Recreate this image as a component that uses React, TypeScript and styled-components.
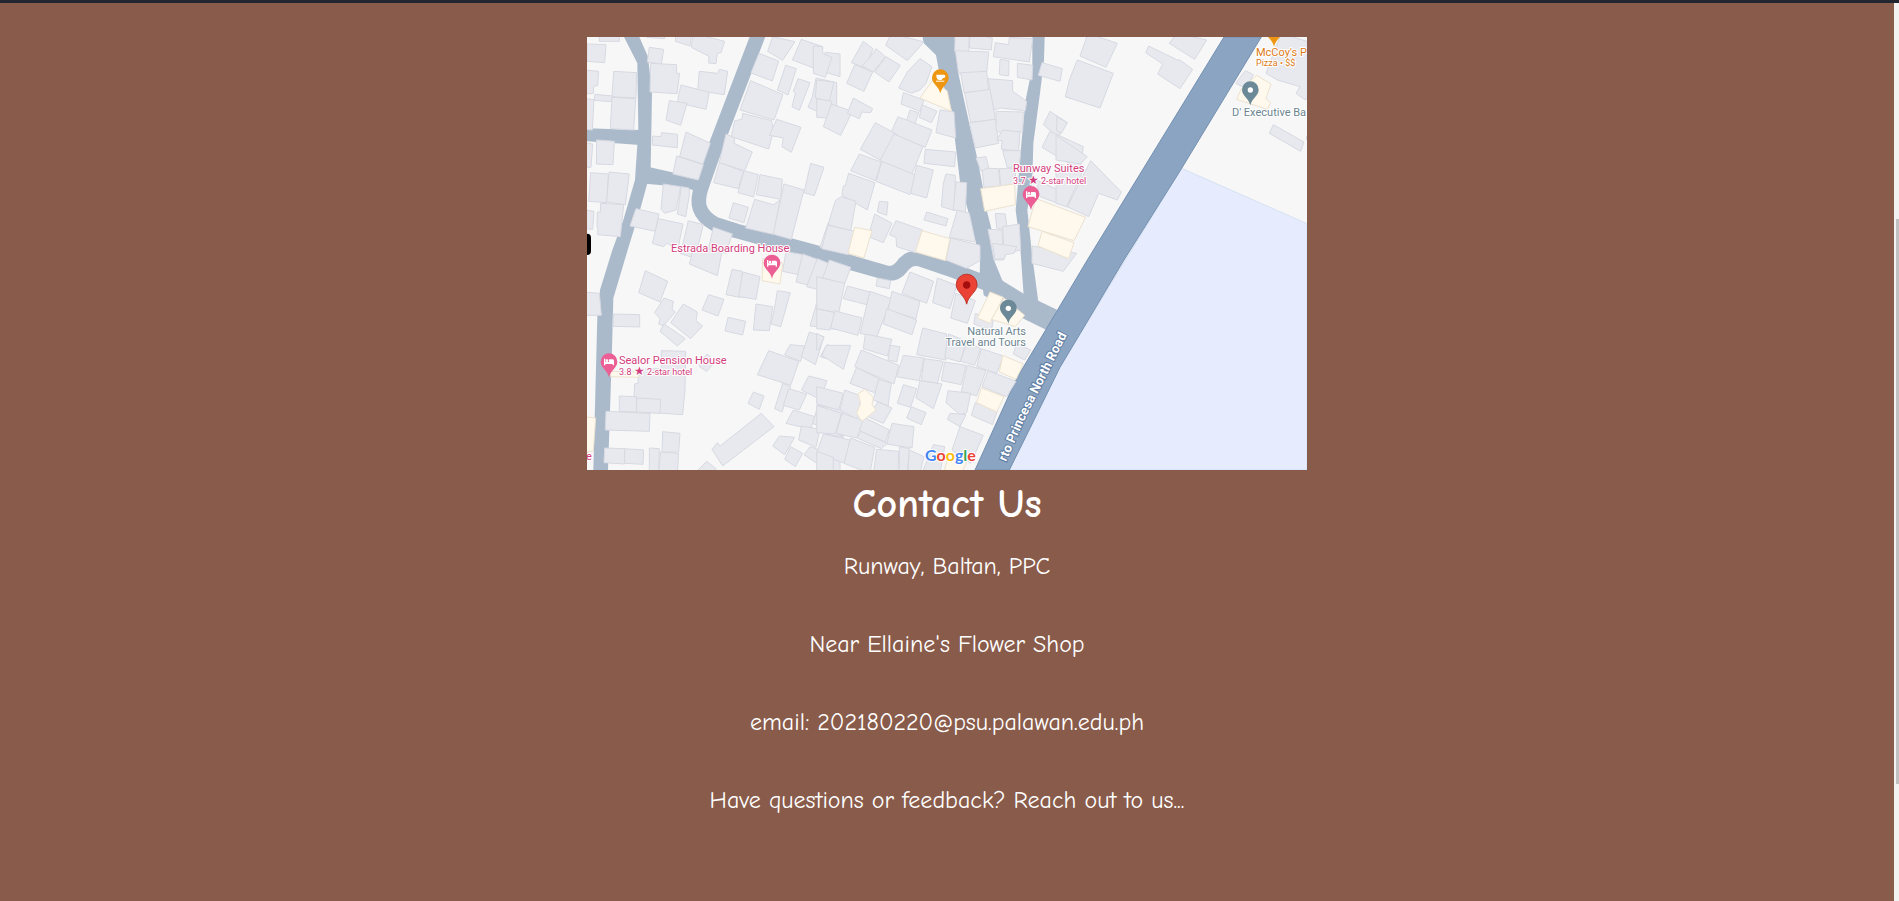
import React from "react";
import styled, { createGlobalStyle } from "styled-components";

const GlobalStyle = createGlobalStyle`
  * { box-sizing: border-box; }
  body { margin: 0; background: #895b4a; }
`;

const Page = styled.div`
  display: flex;
  flex-direction: column;
  min-height: 100vh;
`;

const HeaderEdge = styled.header`
  height: 3px;
  background: #212630;
`;

const Body = styled.div`
  display: flex;
  flex: 1;
`;

const Contact = styled.main`
  flex: 1;
  display: flex;
  flex-direction: column;
  align-items: center;
  padding: 34px 16px 0;
  color: #fff;
  text-align: center;
  font-family: "Comic Sans MS", "Comic Neue", Lato, sans-serif;
`;

const MapFrame = styled.svg`
  display: block;
  width: 100%;
  max-width: 720px;
  height: auto;
  font-family: Roboto, sans-serif;
`;

const Title = styled.h2`
  margin: 8px 0 0;
  font-size: 40px;
  line-height: 52px;
  font-weight: 700;
`;

const Line = styled.p`
  margin: 20px 0 26px;
  font-size: 24px;
  line-height: 32px;
`;

const ScrollTrack = styled.div`
  position: relative;
  width: 5px;
  background: #f2f2f3;
`;

const ScrollThumb = styled.div`
  position: absolute;
  top: 24%;
  right: 0;
  width: 3px;
  height: 63%;
  background: #c1c1c1;
`;

const Label = styled.text<{ $size?: number }>`
  font-size: ${(p) => p.$size ?? 11}px;
  stroke: #fff;
  stroke-width: 2px;
  stroke-linejoin: round;
  paint-order: stroke;
`;

const Star = styled.tspan`
  font-size: 12px;
`;

const RoadName = styled.text`
  font-size: 13px;
  font-weight: 700;
  fill: #fff;
  stroke: #5f7da3;
  stroke-width: 2px;
  paint-order: stroke;
`;

const Wordmark = styled.text`
  font-family: Lato, sans-serif;
  font-size: 16px;
  font-weight: 700;
  stroke: #fff;
  stroke-width: 2px;
  paint-order: stroke;
`;

type Block = { x: number; y: number; houses: string[]; shops: string[] };

const blocks: Block[] = [
  {
    x: -21,
    y: -21,
    houses: [
      "58,10 118,10 118,34 58,34", "21,42 78,44 74,98 21,94", "15,120 56,124 53,166 40,170 41,190 15,192",
      "101,124 170,128 168,204 96,200", "45,193 97,198 95,215 42,211", "96,202 167,206 161,300 91,296",
      "15,206 42,209 37,300 15,298", "208,52 251,58 244,102 202,96", "212,100 290,104 289,130 299,130 291,191 210,186",
      "200,10 255,10 254,26 200,22", "288,10 335,10 330,48 286,34", "340,10 434,34 423,68 412,70 408,101 386,99 387,79 334,52",
      "358,124 413,130 418,118 443,124 433,194 353,182", "303,165 388,187 378,238 293,218 296,193",
      "268,212 321,220 302,286 258,270", "218,318 243,320 244,308 293,313 292,353 217,345",
      "318,306 391,340 369,402 299,380", "290,378 370,404 355,450 279,432", "50,330 103,334 99,404 49,402",
      "15,338 38,342 33,412 15,412", "32,428 85,432 80,518 26,514", "87,426 148,432 136,524 80,516",
      "62,520 131,524 121,620 53,614 54,592 51,592 52,546 61,546", "15,540 42,544 38,598 15,596",
      "168,536 237,552 226,604 150,588", "235,566 309,582 294,655 278,650 262,640 250,650 217,640",
      "250,462 302,470 288,540 254,550 243,538", "304,470 327,474 329,490 317,560 292,552",
      "325,572 370,584 352,656 308,644",
      "400,592 457,612 438,670 386,654", "578,20 645,35 608,91 563,64", "537,70 596,93 577,153 513,129",
      "664,28 728,50 712,118 637,90", "736,67 780,72 780,140 706,118", "617,106 649,116 624,195 592,180",
      "654,146 690,158 658,241 636,230 646,190 640,184", "708,144 770,158 770,270 684,232 697,200",
      "512,152 609,194 582,270 480,240", "488,250 575,272 580,305 566,357 454,320 464,272 486,268",
      "590,268 663,292 634,367 606,350 610,324 568,316", "438,312 464,324 462,340 517,366 494,422 418,398",
      "418,398 490,424 475,476 401,458", "492,422 535,434 521,501 474,488", "540,434 607,448 602,508 529,494",
      "612,462 672,480 634,628 578,612 600,520", "524,508 580,524 600,510 580,613 497,594",
      "692,400 732,412 703,497 672,488", "460,518 505,532 492,578 447,564", "744,580 780,560 780,664 720,652",
    ],
    shops: [],
  },
  {
    x: 699,
    y: -21,
    houses: [
      "-20,48 8,50 8,70 36,82 16,142 -20,130", "130,34 159,56 137,114 94,98", "168,56 196,80 160,126 126,108 150,82",
      "198,80 241,106 207,156 164,126", "104,104 158,126 132,184 80,160", "214,10 312,36 262,92 197,46",
      "300,86 336,110 318,160 300,180 274,190 236,174 262,126", "-10,150 42,156 28,214 -14,204",
      "-10,206 36,214 22,264 -10,262", "34,222 97,244 62,316 10,290", "100,204 158,236 152,248 126,246 118,266 82,250",
      "250,188 312,210 300,244 243,222", "270,240 296,248 284,284 260,272", "306,224 351,244 334,278 298,262",
      "360,240 402,246 407,324 348,308", "234,260 336,300 316,352 212,310", "166,278 232,314 180,390 121,358",
      "222,312 309,350 276,432 180,392", "316,358 407,366 404,410 312,400", "118,372 184,396 166,452 92,422",
      "186,394 288,436 270,494 168,454", "290,406 340,420 320,504 272,490", "86,430 165,458 142,540 66,496 70,468 76,466",
      "64,500 108,514 92,602 24,584 46,512", "24,586 104,604 84,674 5,656", "178,514 204,516 200,556 172,546",
      "164,552 216,580 190,638 145,620", "228,572 308,600 286,668 230,650 228,622 208,614", "320,546 384,566 378,588 312,570",
      "378,432 406,436 404,542 364,530 370,460", "408,456 440,458 436,550 400,538", "412,540 448,550 466,636 388,622",
      "392,624 480,646 480,692 440,715 378,690", "406,10 448,10 446,66 404,64", "450,10 517,24 514,60 448,54",
      "406,62 506,66 500,126 416,132", "422,128 500,124 506,182 432,188", "434,188 512,178 526,268 452,278",
      "448,278 526,268 536,340 466,354", "526,38 566,44 568,22 638,26 628,96 520,80", "540,88 567,92 566,138 538,134",
      "592,100 638,106 636,150 592,142", "504,146 578,152 578,184 620,214 616,242 540,234 522,240", "666,98 727,116 720,154 655,136",
      "528,244 610,246 608,306 566,304 558,320 528,300", "548,300 600,306 596,362 544,358 546,332 530,330", "548,362 602,362 598,406 562,414",
      "486,414 536,416 540,468 492,472", "538,416 587,414 586,462 542,468", "468,384 498,380 506,412 484,424",
      "526,550 556,552 560,588 548,598 530,594", "504,598 546,600 550,690 522,690", "548,590 598,582 602,660 552,672",
      "690,244 742,278 714,322 670,284", "690,304 790,350 780,420 666,352", "648,450 760,500 746,532 660,500",
      "756,130 790,120 790,210 738,202", "636,648 770,670 730,724 636,700",
    ],
    shops: [
      "340,148 382,184 394,244 300,204", "482,476 584,462 586,524 494,544", "104,592 156,602 132,684 84,670",
      "306,602 390,626 376,692 286,666", "648,506 797,562 762,632 624,590 634,552", "666,604 762,638 746,686 654,648",
    ],
  },
  {
    x: 1419,
    y: -21,
    houses: [
      "84,10 172,40 138,112 60,78", "52,90 160,130 120,234 16,200 28,150", "266,48 352,90 360,90 398,118 360,176 293,132 308,102 257,68",
      "350,10 440,30 404,88 328,40", "556,122 580,134 560,176 527,160", "664,10 760,40 760,178 736,210 708,190 720,170 652,150 618,130",
      "640,284 732,336 722,364 628,310", "-10,260 22,278 4,310 -10,302", "-12,316 82,380 62,402 -12,390",
      "92,392 184,486 172,510 116,490 86,560 22,530", "-12,400 70,420 20,530 -12,520", "740,318 760,320 760,332 740,330",
    ],
    shops: ["590,136 633,162 618,206 632,218 622,238 530,208 544,176"],
  },
  {
    x: -21,
    y: 639,
    houses: [
      "310,-20 346,10 330,20 300,10", "344,-15 425,10 412,77 328,42", "10,126 58,130 64,196 10,196", "100,192 179,194 179,231 99,229",
      "196,62 263,94 240,156 176,128", "252,144 280,154 276,178 286,186 250,228 236,222 240,206 224,188",
      "310,162 352,186 348,212 368,228 332,266 272,218", "252,222 316,266 292,288 240,244", "386,134 432,148 414,198 366,180",
      "456,58 487,64 480,142 438,134", "488,66 540,80 528,148 476,140", "444,202 497,214 488,255 435,243",
      "528,162 578,170 568,242 520,240", "592,122 631,128 602,230 574,222 586,160", "618,5 670,14 656,74 608,64",
      "668,12 712,28 688,106 648,96", "712,26 756,44 736,124 680,110", "740,78 780,90 770,186 708,166", "710,160 780,190 770,238 690,228",
      "244,302 317,304 315,420 308,494 160,484 164,402 174,400 176,358 244,356", "364,330 382,312 405,336 380,364 358,350",
      "78,484 210,490 208,544 76,540", "118,438 170,440 170,486 118,484", "170,444 242,448 240,490 170,486",
      "74,594 134,596 133,642 72,638", "134,596 191,600 189,643 134,640", "208,594 238,596 236,670 208,670",
      "248,545 300,550 296,606 246,606", "242,606 296,610 292,670 236,670", "544,490 582,530 428,648 396,598 412,578 420,588",
      "566,302 657,334 632,406 532,374", "630,284 674,288 662,334 614,314", "688,246 732,260 706,344 664,320",
      "742,284 790,300 790,340 720,320", "520,426 552,438 538,478 504,460", "608,400 632,410 606,486 584,476",
      "626,416 680,432 658,480 610,466", "686,378 741,392 720,448 664,420", "640,480 704,500 692,538 618,520",
      "598,558 644,562 614,614 578,588", "632,590 668,610 646,650 614,628", "664,528 720,538 708,592 656,570",
      "690,590 780,620 780,680 740,660 672,614", "714,466 790,480 790,560 698,520", "380,634 408,656 400,670 350,664", "736,552 790,560 790,610 730,596",
    ],
    shops: ["548,26 608,40 600,102 546,92", "92,364 178,366 176,382 92,380", "10,500 47,504 40,602 10,610"],
  },
  {
    x: 699,
    y: 639,
    houses: [
      "28,30 92,52 74,102 8,84", "172,84 212,92 208,116 168,108", "270,66 341,94 320,160 246,130", "352,84 410,106 390,176 338,158",
      "408,130 466,152 442,220 392,204", "82,108 150,126 140,164 70,146", "-10,80 74,100 56,190 -10,176", "42,182 126,204 114,256 32,234",
      "150,124 214,146 170,262 120,250", "216,124 300,154 288,206 204,180", "200,176 290,210 276,254 190,222", "-10,176 44,188 30,240 -10,236",
      "308,234 380,252 378,330 290,314", "136,252 216,268 202,318 130,296", "124,300 236,346 222,402 104,350", "18,286 92,286 70,358 6,316",
      "110,352 184,390 164,428 90,400", "210,286 240,290 230,336 204,330", "250,316 312,324 298,392 230,380", "312,326 370,334 352,400 304,392",
      "386,252 440,274 420,336 374,322", "440,276 482,296 464,346 422,334", "374,336 438,346 424,404 364,392", "442,346 498,362 470,438 424,424",
      "484,296 550,318 530,370 470,350", "504,362 588,394 560,440 486,410", "384,422 452,430 440,488 420,494 378,458",
      "466,458 532,482 518,524 454,496", "390,490 438,494 420,530 382,508", "300,392 366,402 340,476 288,444", "250,404 290,416 272,472 232,460",
      "176,388 214,400 204,468 160,450", "74,420 124,438 112,508 60,480", "-10,410 70,430 56,480 -10,462", "174,456 216,474 190,520 144,500",
      "66,490 130,512 110,564 48,550", "-10,466 64,490 46,552 -10,548", "132,502 208,540 196,576 118,542", "216,520 282,530 276,594 200,582",
      "122,544 202,580 184,596 112,564", "10,552 90,570 76,640 -10,610", "92,564 164,592 150,670 72,640", "274,470 318,488 304,524 260,504",
      "170,598 236,604 234,670 160,670", "238,590 268,596 262,670 238,670", "268,600 312,620 300,670 264,670", "340,584 374,590 360,670 310,660",
      "420,530 490,556 452,640 396,600", "466,190 520,212 514,240 462,222", "590,280 632,300 614,330 580,312", "-10,250 12,262 -4,300 -10,300",
      "518,-20 590,-10 582,10 556,14 554,26 524,28", "-10,604 40,622 40,670 -10,660",
    ],
    shops: [
      "510,126 550,142 510,220 472,204", "552,144 614,196 586,230 514,208", "548,316 610,342 588,388 538,366",
      "484,414 552,440 530,486 470,458", "114,432 134,418 160,442 156,464 168,480 126,514 110,490 122,460",
      "390,606 440,638 424,670 370,670",
    ],
  },
];

const pinPath = "M0 46C-4 24 -25 18 -25 -1A25 25 0 0 1 25 -1C25 18 4 24 0 46Z";

type PinKind = "hotel" | "cafe" | "place" | "target";
const pinColour: Record<PinKind, string> = { hotel: "#ec5f94", cafe: "#ee9611", place: "#6b8997", target: "#ea4335" };

function Pin({ x, y, kind }: { x: number; y: number; kind: PinKind }) {
  return (
    <g transform={`translate(${x} ${y})`}>
      <path
        d={pinPath}
        transform={kind === "target" ? "scale(1.25)" : undefined}
        fill={pinColour[kind]}
        stroke={kind === "target" ? "#b5261c" : "none"}
        strokeWidth={2}
      />
      {kind === "hotel" && (
        <g fill="#fff">
          <path d="M-15 -10h4v10h26v10h-4v-4h-22v4h-4z" />
          <path d="M0 -8h10c3 0 5 2 5 5v5h-15z" />
          <circle cx={-6} cy={-4} r={4} />
        </g>
      )}
      {kind === "cafe" && (
        <g fill="#fff">
          <path d="M-12 -10h22c8 0 6 11-2 10c-2 5-5 6-9 6c-7 0-11-4-11-16z" />
          <rect x={-13} y={8} width={25} height={3} />
        </g>
      )}
      {kind === "place" && <circle r={8} fill="#fff" />}
      {kind === "target" && <circle r={11} fill="#a50e0e" />}
    </g>
  );
}

function LocationMap() {
  return (
    <MapFrame viewBox="0 0 720 433" role="img" aria-label="Map of the shop location">
      <rect width={720} height={433} fill="#f7f7f7" />
      <g transform="scale(0.333333)">
        <path d="M1784 394L2160 560V1299H1267L1419 991Z" fill="#e6ecfd" stroke="#c9d9ee" strokeWidth={2} />
        <g fill="#aabacb">
          <path d="M111 0L151 79L154 279L144 429L109 549L76 639L39 759L31 839L19 1299H63L75 939L79 784L122 639L159 519L181 439L191 394L195 169L183 59L157 0Z" />
          <path d="M0 274L160 279V324L0 313Z" />
          <path d="M185 390L269 409L345 428L330 462L279 449L175 440Z" />
          <path d="M1007 0L1009 17L1047 54L1057 109L1094 219L1104 309L1119 434L1144 524L1167 619L1179 669L1178 740H1250L1221 669L1214 579L1199 519L1189 459L1174 379L1164 334L1149 269L1129 179L1114 109L1107 39L1103 0Z" />
          <path d="M1336 0V89L1316 189L1304 309L1294 429L1286 519L1299 619L1311 790L1356 810L1336 659L1321 519L1336 429L1339 319L1359 169L1371 69L1373 0Z" />
        </g>
        <path
          d="M515 -10L393 309L345 445C325 500 335 535 385 562L449 582L699 650L799 679L900 708Q925 713 942 692Q967 656 1000 667L1100 701L1200 740L1310 799L1400 840"
          fill="none" stroke="#aabacb" strokeWidth={44} strokeLinejoin="round"
        />
        <path d="M1180 690L1310 770L1410 818L1380 880L1310 845L1190 775Z" fill="#aabacb" />
        <path d="M1911 0L1501 669L1379 874L1289 1024L1164 1299H1267L1419 991L1611 669L1784 394L2023 0Z" fill="#8aa4c1" stroke="#7490b2" strokeWidth={3} />
        {blocks.map((block) => (
          <g key={`${block.x},${block.y}`} transform={`translate(${block.x} ${block.y})`} strokeWidth={3}>
            <g fill="#e8e9ee" stroke="#d7d9e2">
              {block.houses.map((points) => <polygon key={points} points={points} />)}
            </g>
            <g fill="#fef9ec" stroke="#ebe1cf">
              {block.shops.map((points) => <polygon key={points} points={points} />)}
            </g>
          </g>
        ))}
        <rect x={-20} y={590} width={32} height={64} rx={12} fill="#000" />
        <Pin x={1060} y={123} kind="cafe" />
        <Pin x={1332} y={473} kind="hotel" />
        <Pin x={555} y={679} kind="hotel" />
        <Pin x={66} y={975} kind="hotel" />
        <Pin x={1990} y={159} kind="place" />
        <Pin x={1264} y={814} kind="place" />
        <Pin x={2061} y={-17} kind="cafe" />
        <Pin x={1139} y={744} kind="target" />
      </g>
      <g fill="#d23c7c">
        <Label x={84} y={215}>Estrada Boarding House</Label>
        <Label x={426} y={135}>Runway Suites</Label>
        <Label x={426} y={147} $size={9}>3.7 <Star>★</Star> 2-star hotel</Label>
        <Label x={32} y={327}>Sealor Pension House</Label>
        <Label x={32} y={338} $size={9}>3.8 <Star>★</Star> 2-star hotel</Label>
        <Label x={-1} y={423}>e</Label>
      </g>
      <g fill="#dd7a14">
        <Label x={669} y={19}>McCoy's P</Label>
        <Label x={669} y={29} $size={9}>Pizza • $$</Label>
      </g>
      <g fill="#6b8490">
        <Label x={645} y={79}>D' Executive Ba</Label>
        <Label x={439} y={298} textAnchor="end">Natural Arts</Label>
        <Label x={439} y={309} textAnchor="end">Travel and Tours</Label>
      </g>
      <path id="north-road" d="M390 492L436 386L480 298" fill="none" />
      <RoadName textAnchor="end">
        <textPath href="#north-road" startOffset="100%">rto Princesa North Road</textPath>
      </RoadName>
      <Wordmark x={338} y={424}>
        <tspan fill="#4285f4">G</tspan>
        <tspan fill="#ea4335">o</tspan>
        <tspan fill="#fbbc04">o</tspan>
        <tspan fill="#4285f4">g</tspan>
        <tspan fill="#34a853">l</tspan>
        <tspan fill="#ea4335">e</tspan>
      </Wordmark>
    </MapFrame>
  );
}

export default function App() {
  return (
    <Page>
      <GlobalStyle />
      <HeaderEdge />
      <Body>
        <Contact>
          <LocationMap />
          <Title>Contact Us</Title>
          <Line>Runway, Baltan, PPC</Line>
          <Line>Near Ellaine's Flower Shop</Line>
          <Line>email: 202180220@psu.palawan.edu.ph</Line>
          <Line>Have questions or feedback? Reach out to us...</Line>
        </Contact>
        <ScrollTrack>
          <ScrollThumb />
        </ScrollTrack>
      </Body>
    </Page>
  );
}
